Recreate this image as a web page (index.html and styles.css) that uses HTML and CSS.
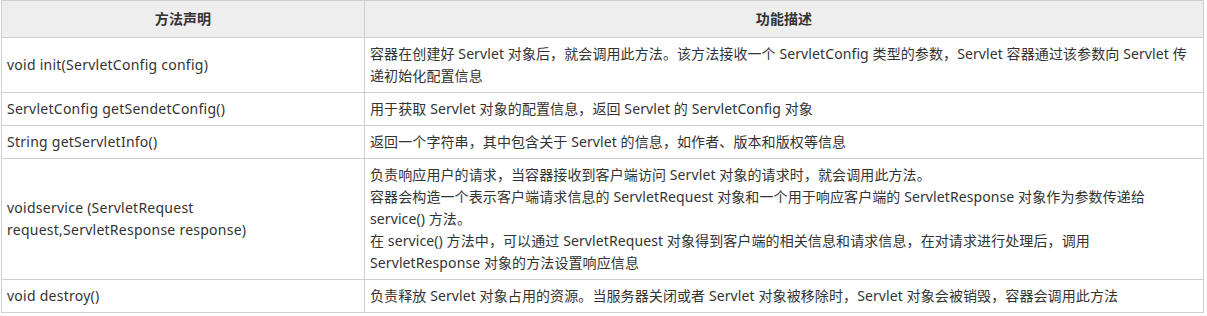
FILE: index.html
```html
<!DOCTYPE html>
<html lang="zh-CN">
<head>
<meta charset="utf-8">
<title>Servlet 方法</title>
<link rel="stylesheet" href="styles.css">
</head>
<body>
<table class="methods">
  <colgroup>
    <col class="col-sig">
    <col class="col-desc">
  </colgroup>
  <thead>
    <tr>
      <th>方法声明</th>
      <th>功能描述</th>
    </tr>
  </thead>
  <tbody>
    <tr>
      <td class="sig">void init(ServletConfig config)</td>
      <td>容器在创建好 Servlet 对象后，就会调用此方法。该方法接收一个 ServletConfig 类型的参数，Servlet 容器通过该参数向 Servlet 传递初始化配置信息</td>
    </tr>
    <tr>
      <td class="sig">ServletConfig getSendetConfig()</td>
      <td>用于获取 Servlet 对象的配置信息，返回 Servlet 的 ServletConfig 对象</td>
    </tr>
    <tr>
      <td class="sig">String getServletInfo()</td>
      <td>返回一个字符串，其中包含关于 Servlet 的信息，如作者、版本和版权等信息</td>
    </tr>
    <tr>
      <td class="sig">voidservice (ServletRequest request,ServletResponse response)</td>
      <td>负责响应用户的请求，当容器接收到客户端访问 Servlet 对象的请求时，就会调用此方法。<br>容器会构造一个表示客户端请求信息的 ServletRequest 对象和一个用于响应客户端的 ServletResponse 对象作为参数传递给 service() 方法。<br>在 service() 方法中，可以通过 ServletRequest 对象得到客户端的相关信息和请求信息，在对请求进行处理后，调用 ServletResponse 对象的方法设置响应信息</td>
    </tr>
    <tr>
      <td class="sig">void destroy()</td>
      <td>负责释放 Servlet 对象占用的资源。当服务器关闭或者 Servlet 对象被移除时，Servlet 对象会被销毁，容器会调用此方法</td>
    </tr>
  </tbody>
</table>
</body>
</html>
```

FILE: styles.css
```css
html, body {
  margin: 0;
  padding: 0;
  background: #fff;
}

body {
  padding: 0 0 0 1px;
  font-family: "Noto Sans", "Noto Sans CJK SC", sans-serif;
  font-size: 14px;
  color: #333;
}

.methods {
  border-collapse: collapse;
  width: 1203px;
  table-layout: fixed;
}

.col-sig {
  width: 363px;
}

.methods th,
.methods td {
  border: 1px solid #cfcfcf;
  padding: 5px 5px;
  line-height: 22px;
  text-align: left;
  vertical-align: middle;
  letter-spacing: 0.1px;
}

.methods td.sig {
  letter-spacing: 0.25px;
}

.methods th {
  background: #eeeeee;
  font-weight: bold;
  text-align: center;
  padding: 7px 5px;
}
```
